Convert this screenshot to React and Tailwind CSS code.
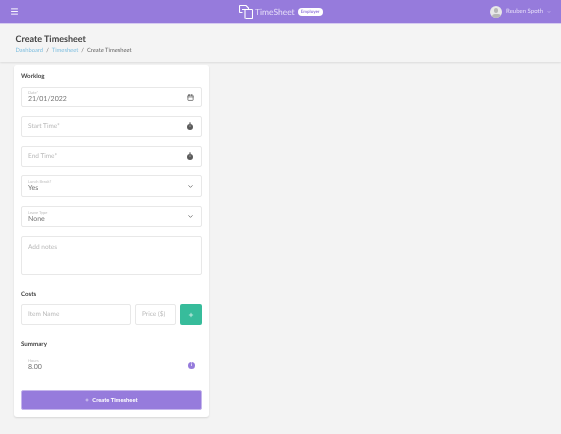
import React from 'react';
import { Menu, Calendar, ChevronDown, Plus } from 'lucide-react';

function Stopwatch() {
  return (
    <svg width="8" height="9" viewBox="0 0 8 9" className="shrink-0 -mt-[1px]">
      <circle cx="4" cy="5" r="3" fill="#5a5a5a" />
      <rect x="3" y="0.6" width="2" height="1" fill="#5a5a5a" />
      <rect x="3.7" y="3.2" width="0.6" height="1.8" fill="#ccc" />
    </svg>
  );
}

function Logo() {
  return (
    <svg width="14" height="14" viewBox="0 0 14 14" fill="none" stroke="#fff" strokeWidth="1.1" className="shrink-0">
      <path d="M3.5 7.5H1.2C0.8 7.5 0.5 7.2 0.5 6.8V1.2C0.5 0.8 0.8 0.5 1.2 0.5H7L9.5 3V4" />
      <path d="M3 4.5H12.8C13.2 4.5 13.5 4.8 13.5 5.2V12.8C13.5 13.2 13.2 13.5 12.8 13.5H6.5" />
      <path d="M6 4.5V13.5" />
    </svg>
  );
}

function Avatar() {
  return (
    <div className="relative w-[12px] h-[12px] rounded-full bg-[#e8e8e8] overflow-hidden shrink-0">
      <div className="absolute left-[4px] top-[2px] w-[4px] h-[5px] rounded-full bg-[#b8b8b8]" />
      <div className="absolute left-[1.5px] top-[8px] w-[9px] h-[6px] rounded-full bg-[#b8b8b8]" />
    </div>
  );
}

function Field({ label, value, placeholder, icon, h = 'h-[20px]', className = '' }) {
  return (
    <div className={`${h} ${className} rounded-[2px] border border-[#e8e8e8] bg-white flex items-center justify-between pl-[6px] pr-[7px]`}>
      {placeholder ? (
        <span className="text-[6.5px] text-[#b9b9b9]">{placeholder}</span>
      ) : (
        <div className="flex flex-col">
          <span className="text-[4px] leading-[5px] text-[#bdbdbd]">{label}</span>
          <span className="text-[7px] leading-[9px] text-[#777]">{value}</span>
        </div>
      )}
      {icon}
    </div>
  );
}

export default function App() {
  return (
    <div className="w-[561px] h-[434px] overflow-hidden bg-[#f3f3f3]">
      <div className="[will-change:transform] font-['Lato','Noto_Sans',sans-serif] [text-rendering:geometricPrecision]">
        {/* Top bar */}
        <div className="h-[24px] bg-[#967bdc] border-b border-b-[#d5caf0] flex items-center justify-between pl-[10px] pr-[10px] relative">
          <Menu size={9} className="text-white" strokeWidth={2.5} />
          <div className="absolute left-[239px] top-[5px] flex items-center">
            <Logo />
            <span className="ml-[2px] text-[8.5px] text-[#e6def8]">TimeSheet</span>
            <span className="ml-[3px] h-[8px] px-[3px] rounded-full bg-white text-[#967bdc] text-[4.5px] leading-[8px] font-bold">Employer</span>
          </div>
          <div className="flex items-center">
            <Avatar />
            <span className="ml-[4px] text-[6px] text-[#e6def8]">Reuben Spoth</span>
            <ChevronDown size={4} className="ml-[4px] text-[#e6def8]" strokeWidth={3} />
          </div>
        </div>

        {/* Page heading */}
        <div className="h-[38px] bg-[#f4f4f4] shadow-[0_1px_2px_rgba(0,0,0,0.1)] pl-[15.5px] pt-[8.5px]">
          <h1 className="text-[9px] leading-[11px] font-bold text-[#444]">Create Timesheet</h1>
          <div className="mt-[3px] text-[5.8px] leading-[7px] text-[#666] flex gap-[3px]">
            <span className="text-[#7fbfe0]">Dashboard</span>
            <span>/</span>
            <span className="text-[#7fbfe0]">Timesheet</span>
            <span>/</span>
            <span>Create Timesheet</span>
          </div>
        </div>

        {/* Form card */}
        <div className="ml-[14px] mt-[3px] w-[195px] h-[352px] bg-white rounded-[3px] shadow-[0_1px_2px_rgba(0,0,0,0.12)] px-[7px] pt-[8px]">
          <h2 className="text-[6.2px] leading-[8px] font-bold text-[#444]">Worklog</h2>
          <Field className="mt-[6px]" label="Date*" value="21/01/2022" icon={<Calendar size={7} className="text-[#555]" strokeWidth={2.5} />} />
          <Field className="mt-[9px]" h="h-[21px]" placeholder="Start Time*" icon={<Stopwatch />} />
          <Field className="mt-[9px]" h="h-[21px]" placeholder="End Time*" icon={<Stopwatch />} />
          <Field className="mt-[8px]" h="h-[22px]" label="Lunch Break?" value="Yes" icon={<ChevronDown size={7} className="text-[#555]" strokeWidth={2.5} />} />
          <Field className="mt-[9px]" h="h-[21px]" label="Leave Type" value="None" icon={<ChevronDown size={7} className="text-[#555]" strokeWidth={2.5} />} />
          <div className="mt-[9px] h-[39px] rounded-[2px] border border-[#e8e8e8] pl-[6px] pt-[6px] text-[6.5px] leading-[9px] text-[#b9b9b9]">Add notes</div>

          <h2 className="mt-[16px] text-[6.2px] leading-[8px] font-bold text-[#444]">Costs</h2>
          <div className="mt-[5px] flex gap-[4px]">
            <div className="w-[110px] h-[21px] rounded-[2px] border border-[#e8e8e8] pl-[6px] flex items-center text-[6.5px] text-[#b9b9b9]">Item Name</div>
            <div className="w-[41px] h-[21px] rounded-[2px] border border-[#e8e8e8] pl-[6px] flex items-center text-[6.5px] text-[#b9b9b9]">Price ($)</div>
            <div className="w-[22px] h-[21px] rounded-[2px] bg-[#37bc9b] flex items-center justify-center">
              <Plus size={6} className="text-white" strokeWidth={2.5} />
            </div>
          </div>

          <h2 className="mt-[16px] text-[6.2px] leading-[8px] font-bold text-[#444]">Summary</h2>
          <div className="mt-[8px] h-[16px] flex items-center justify-between pl-[7px] pr-[7px]">
            <div className="flex flex-col">
              <span className="text-[4px] leading-[5px] text-[#bdbdbd]">Hours</span>
              <span className="text-[7px] leading-[9px] text-[#777]">8.00</span>
            </div>
            <div className="w-[7px] h-[7px] rounded-full bg-[#967bdc] text-white text-[5px] leading-[7px] font-bold text-center">i</div>
          </div>
          <button className="mt-[17px] w-full h-[20px] rounded-[2px] bg-[#967bdc] border border-[#c5b6ec] flex items-center justify-center gap-[3px] text-white text-[5.8px] font-bold">
            <Plus size={4} strokeWidth={3} />
            Create Timesheet
          </button>
        </div>
      </div>
    </div>
  );
}
